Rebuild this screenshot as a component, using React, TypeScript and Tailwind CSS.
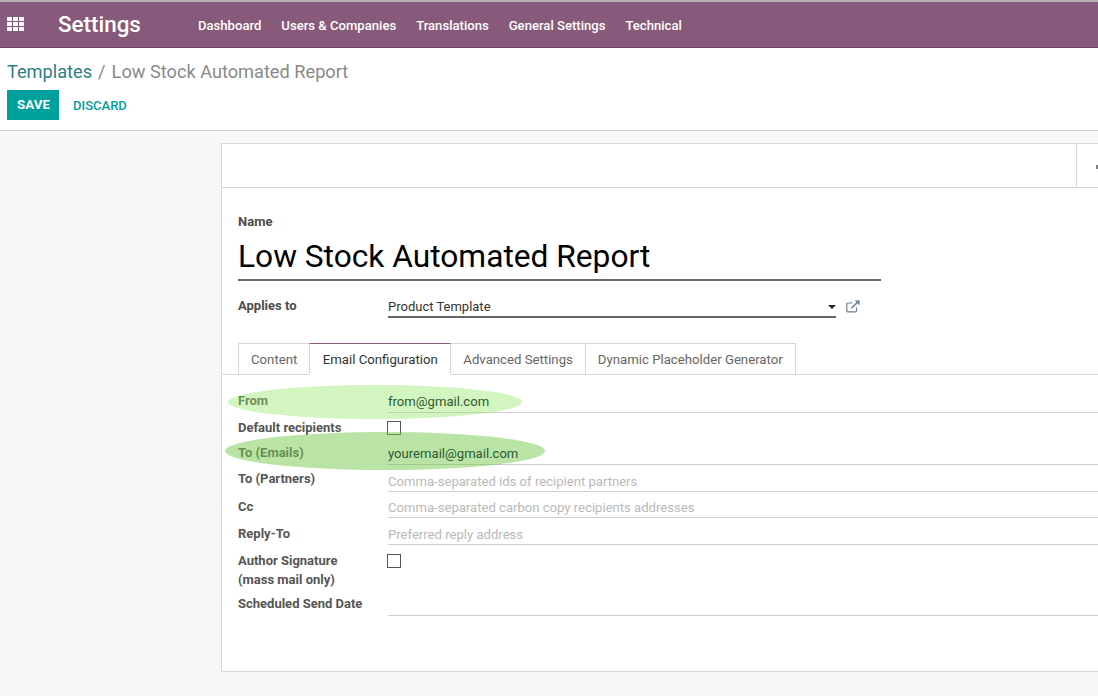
import { ReactNode } from "react";

const navItems = ["Dashboard", "Users & Companies", "Translations", "General Settings", "Technical"];
const tabs = ["Content", "Email Configuration", "Advanced Settings", "Dynamic Placeholder Generator"];

function AppsIcon() {
  return (
    <svg width="18" height="15" viewBox="0 0 18 15" fill="#fff">
      {[0, 5, 10].map((y) =>
        [0, 6, 12].map((x) => <rect key={`${x}-${y}`} x={x} y={y} width="5" height="4" rx="0.5" />)
      )}
    </svg>
  );
}

function ExternalIcon() {
  return (
    <svg width="14" height="13" viewBox="0 0 14 13" fill="none" stroke="#6f7f8f" strokeWidth="1.2">
      <path d="M10.5 7.5v3.2a1.2 1.2 0 0 1-1.2 1.2H2a1.2 1.2 0 0 1-1.2-1.2V4.2A1.2 1.2 0 0 1 2 3h4.5" />
      <path d="M5.5 8.2 12.5 1.2" strokeWidth="1.6" />
      <path d="M9 .7h4.3V5" fill="#6f7f8f" strokeWidth="0.6" />
    </svg>
  );
}

function Checkbox() {
  return <div className="w-[14px] h-[14px] -ml-px border border-[#555] bg-white" />;
}

function Row({
  label,
  height,
  labelPad = "pt-[4px]",
  children,
}: {
  label: ReactNode;
  height: string;
  labelPad?: string;
  children: ReactNode;
}) {
  return (
    <div className={`flex ${height}`}>
      <div className={`w-[150px] shrink-0 font-bold text-[13px] leading-[19px] text-[#555] ${labelPad}`}>{label}</div>
      <div className="flex-1 min-w-0">{children}</div>
    </div>
  );
}

function Field({ value, placeholder, height = "h-[26px]" }: { value?: string; placeholder?: string; height?: string }) {
  return (
    <div
      className={`${height} border-b border-[#cdcdcd] text-[13.1px] leading-[19px] ${
        value ? "pt-[5px]" : "pt-[6px] text-[#b9b9b9]"
      }`}
    >
      {value ? <span className="relative z-10 text-[#2b5a30]">{value}</span> : placeholder}
    </div>
  );
}

export default function App() {
  return (
    <div className="relative h-[696px] w-[1098px] overflow-hidden bg-[#f7f7f7] font-['Roboto',sans-serif]">
      <div className="h-[48px] border-t-2 border-t-[#b5aeb3] border-b border-b-[#6b4560] bg-[#875a7b] flex items-center text-white">
        <div className="w-[58px] shrink-0 pl-[7px] pb-[1px]">
          <AppsIcon />
        </div>
        <div className="w-[140px] shrink-0 text-[22.4px] font-medium pt-[1px]">Settings</div>
        <div className="flex gap-[20px] text-[13.1px] font-medium pt-[3px]">
          {navItems.map((item) => (
            <span key={item}>{item}</span>
          ))}
        </div>
      </div>

      <div className="h-[83px] bg-white border-b border-[#cfcfcf] pl-[7px] pt-[12px]">
        <div className="text-[18.2px] leading-[24px] text-[#8a8a8a] whitespace-pre">
          <span className="text-[#2a7f84]">Templates</span>
          <span className="mx-[6px]">/</span>Low Stock Automated Report
        </div>
        <div className="flex items-center mt-[6px]">
          <button className="w-[52px] h-[30px] bg-[#00a09d] text-white text-[13.3px] font-bold pl-[1px]">SAVE</button>
          <button className="ml-[14px] text-[#00a09d] text-[13px] font-medium pt-[1px]">DISCARD</button>
        </div>
      </div>

      <div className="mt-[12px] ml-[221px] w-[900px] h-[529px] bg-white border border-[#d4d7dd]">
        <div className="h-[44px] border-b border-[#d4d7dd] flex justify-end">
          <div className="w-[44px] border-l border-[#d4d7dd] pl-[19px] pt-[21px]">
            <div className="w-[4px] h-[4px] bg-[#808080]" />
          </div>
        </div>

        <div className="pl-[16px] pt-[25px]">
          <div className="font-bold text-[13px] leading-[18px] text-[#4c4c4c]">Name</div>
          <div className="w-[643px] h-[47px] mt-[3px] border-b-2 border-[#666] text-[31.7px] leading-[46px] text-black">
            Low Stock Automated Report
          </div>
          <div className="flex mt-[15px]">
            <div className="w-[150px] shrink-0 font-bold text-[13px] leading-[19px] text-[#4c4c4c]">Applies to</div>
            <div className="w-[448px] h-[22px] border-b-2 border-[#666] flex items-center justify-between text-[13px] text-[#333] pt-[2px]">
              Product Template
              <span className="w-0 h-0 border-x-4 border-x-transparent border-t-[4px] border-t-[#222]" />
            </div>
            <div className="ml-[10px] pt-[4px]">
              <ExternalIcon />
            </div>
          </div>
        </div>

        <div className="mt-[25px] h-[32px] border-b border-[#d4d7dd] pl-[16px] flex text-[13.2px] text-[#666]">
          {tabs.map((tab, i) => (
            <div
              key={tab}
              className={
                i === 1
                  ? "h-[32px] px-[12.5px] -ml-px border border-[#d4d7dd] border-t-[#875a7b] border-b-white bg-white text-[#333] leading-[32px] z-10"
                  : `h-[31px] px-[12px] border-t border-r border-[#d4d7dd] leading-[32px] ${i === 0 ? "border-l" : ""}`
              }
            >
              {tab}
            </div>
          ))}
        </div>

        <div className="pl-[16px] pt-[12px]">
          <Row label="From" height="h-[26px]">
            <Field value="from@gmail.com" />
          </Row>
          <Row label="Default recipients" height="h-[26px]" labelPad="pt-[5px]">
            <div className="pt-[8px]">
              <Checkbox />
            </div>
          </Row>
          <Row label="To (Emails)" height="h-[26px]" labelPad="pt-[4px]">
            <Field value="youremail@gmail.com" />
          </Row>
          <Row label="To (Partners)" height="h-[27px] pt-[1px]" labelPad="pt-[3px]">
            <Field placeholder="Comma-separated ids of recipient partners" />
          </Row>
          <Row label="Cc" height="h-[27px]" labelPad="pt-[5px]">
            <Field placeholder="Comma-separated carbon copy recipients addresses" />
          </Row>
          <Row label="Reply-To" height="h-[27px]" labelPad="pt-[5px]">
            <Field placeholder="Preferred reply address" />
          </Row>
          <Row
            label={
              <>
                Author Signature
                <br />
                (mass mail only)
              </>
            }
            height="h-[45px]"
            labelPad="pt-[5px]"
          >
            <div className="pt-[8px]">
              <Checkbox />
            </div>
          </Row>
          <Row label="Scheduled Send Date" height="h-[26px]" labelPad="pt-[3px]">
            <Field height="h-[25px]" />
          </Row>
        </div>
      </div>

      <div className="absolute left-[228px] top-[385px] w-[294px] h-[34px] rounded-[50%] bg-[#91e661] opacity-40" />
      <div className="absolute left-[225px] top-[432px] w-[320px] h-[38px] rounded-[50%] bg-[#76ca4e] opacity-50" />
    </div>
  );
}
